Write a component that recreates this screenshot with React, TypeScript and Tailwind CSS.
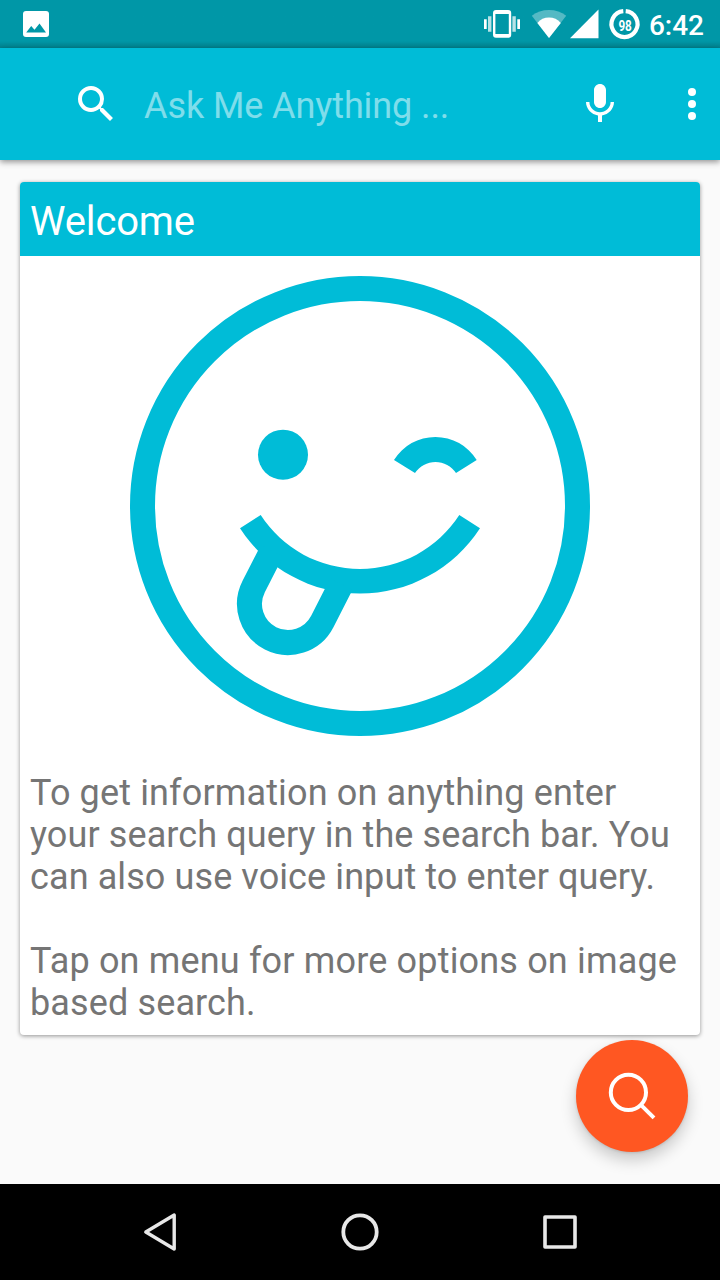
const BODY_LINES = [
  { text: "To get information on anything enter", tracking: "tracking-[0.14px]" },
  { text: "your search query in the search bar. You", tracking: "tracking-[0.1px]" },
  { text: "can also use voice input to enter query.", tracking: "tracking-[0.1px]" },
  { text: "", tracking: "" },
  { text: "Tap on menu for more options on image", tracking: "tracking-[0.17px]" },
  { text: "based search.", tracking: "tracking-[0.13px]" },
];

function StatusBar() {
  return (
    <div className="flex h-12 shrink-0 items-center justify-between bg-gradient-to-b from-[#0097a7] from-85% to-[#00828f] pr-4 text-white">
      <svg className="ml-[23px] h-[26px] w-[26px]" viewBox="0 0 26 26" fill="none">
        <rect width="26" height="26" rx="3" fill="white" />
        <path d="M3.2 21.5 8.2 15l3.3 3.8 5-6.3 6.5 9z" fill="#0097a7" />
      </svg>
      <div className="flex h-12 items-center">
        <svg className="h-12 w-[160px]" viewBox="484 0 160 48" fill="white">
          <rect x="494.2" y="11.2" width="15.8" height="25.4" rx="1.8" fill="none" stroke="white" strokeWidth="2.4" />
          <path d="M494 11h16v3h-16zM494 34h16v3h-16z" />
          <path d="M488 16.3h3.4v15.4H488zM512.4 16.3h3.4v15.4h-3.4z" opacity=".72" />
          <path d="M484 19.3h2.7v9.7H484zM517.3 19.3h2.7v9.7h-2.7z" />
          <path d="M549 38 531.8 15.8Q539 10 549 10t17.2 5.8z" opacity=".33" />
          <path d="M549 38 537.4 22.9Q542 17.5 549 17.5t11.8 5.4z" />
          <path d="M570 38.3 598.5 9.6V38.3z" />
          <path d="M625.7 11.1A13 13 0 1 1 623.3 11.1" fill="none" stroke="white" strokeWidth="4.2" />
          <text x="618.4" y="30.5" textLength="13.4" lengthAdjust="spacingAndGlyphs" className="font-[Roboto,sans-serif] text-[14.5px] font-bold">98</text>
        </svg>
        <span className="ml-[5px] mt-[3px] font-[Roboto,sans-serif] text-[28px] leading-8 font-medium">6:42</span>
      </div>
    </div>
  );
}

function Toolbar() {
  return (
    <div className="z-10 flex h-28 shrink-0 items-center bg-[#00bcd7] pr-1 pl-[72px] text-white shadow-[0_2px_6px_rgba(0,0,0,0.42)]">
      <svg className="h-12 w-12" viewBox="0 0 24 24" fill="currentColor">
        <path d="M15.5 14h-.79l-.28-.27A6.471 6.471 0 0 0 16 9.5 6.5 6.5 0 1 0 9.5 16c1.61 0 3.09-.59 4.23-1.57l.27.28v.79l5 4.99L20.49 19l-4.99-5zm-6 0C7.01 14 5 11.99 5 9.5S7.01 5 9.5 5 14 7.01 14 9.5 11.99 14 9.5 14z" />
      </svg>
      <span className="mt-1 ml-6 flex-1 text-[36px] leading-[42px] tracking-[-0.09px] text-white/50">Ask Me Anything ...</span>
      <svg className="h-12 w-12" viewBox="0 0 24 24" fill="currentColor">
        <path d="M12 14c1.66 0 2.99-1.34 2.99-3L15 5c0-1.66-1.34-3-3-3S9 3.34 9 5v6c0 1.66 1.34 3 3 3zm5.3-3c0 3-2.54 5.1-5.3 5.1S6.7 14 6.7 11H5c0 3.41 2.72 6.23 6 6.72V21h2v-3.28c3.28-.48 6-3.3 6-6.72h-1.7z" />
      </svg>
      <svg className="ml-11 h-12 w-12" viewBox="0 0 24 24" fill="currentColor">
        <circle cx="12" cy="6" r="2" />
        <circle cx="12" cy="12" r="2" />
        <circle cx="12" cy="18" r="2" />
      </svg>
    </div>
  );
}

function WinkingFace() {
  return (
    <svg className="mx-auto mt-5 h-[460px] w-[460px]" viewBox="130 276 460 460" fill="#00bcd7">
      <circle cx="360" cy="506" r="217.5" fill="none" stroke="#00bcd7" strokeWidth="25" />
      <circle cx="283" cy="454.7" r="25" />
      <path d="M394 460A48.6 48.6 0 0 1 476.7 460L456 473A24.6 24.6 0 0 0 415 473Z" />
      <path d="M240 528.2 260.7 515A118.3 118.3 0 0 0 459.3 515L480 528.2A142.9 142.9 0 0 1 240 528.2Z" />
      <path d="M271.9 550.9 253.7 586.5A38.5 38.5 0 0 0 322.3 621.5L341.4 584" fill="none" stroke="#00bcd7" strokeWidth="25" />
    </svg>
  );
}

function WelcomeCard() {
  return (
    <div className="mx-5 mt-[22px] h-[853px] overflow-hidden rounded-[4px] bg-white shadow-[0_1px_4px_rgba(0,0,0,0.42)]">
      <h1 className="h-[74px] bg-[#00bcd7] pt-4 pl-[10px] text-[40px] leading-[47px] tracking-[-0.14px] text-white">Welcome</h1>
      <WinkingFace />
      <div className="mt-9 pl-[10px] text-[36px] leading-[42px] whitespace-nowrap text-[#757575]">
        {BODY_LINES.map((line, i) => (
          <p key={i} className={`h-[42px] ${line.tracking}`}>{line.text}</p>
        ))}
      </div>
    </div>
  );
}

function NavigationBar() {
  return (
    <div className="z-10 flex h-24 shrink-0 items-center justify-center gap-[152px] bg-black">
      <svg className="h-12 w-12" viewBox="0 0 48 48" fill="none" stroke="#e8e8e8" strokeWidth="3.4" strokeLinejoin="round">
        <path d="M9.8 24 38.2 7v34z" />
      </svg>
      <svg className="h-12 w-12" viewBox="0 0 48 48" fill="none" stroke="#e8e8e8" strokeWidth="3.8">
        <circle cx="24" cy="24" r="16.7" />
      </svg>
      <svg className="h-12 w-12" viewBox="0 0 48 48" fill="none" stroke="#e8e8e8" strokeWidth="3.6" strokeLinejoin="round">
        <rect x="9" y="9" width="30" height="30" />
      </svg>
    </div>
  );
}

export default function App() {
  return (
    <div className="relative flex h-[1280px] w-[720px] flex-col overflow-hidden bg-[#fafafa] font-[Roboto,sans-serif]">
      <StatusBar />
      <Toolbar />
      <main className="flex-1">
        <WelcomeCard />
      </main>
      <button
        aria-label="Search"
        className="absolute right-8 bottom-32 h-28 w-28 rounded-full bg-[#ff5722] shadow-[0_8px_16px_rgba(0,0,0,0.2),0_1px_3px_rgba(0,0,0,0.12)]"
      >
        <svg className="h-28 w-28" viewBox="0 0 112 112" fill="none" stroke="white">
          <circle cx="52.4" cy="52.4" r="17.6" strokeWidth="4" />
          <path d="M64.6 64.6 78 77.8" strokeWidth="4" />
        </svg>
      </button>
      <NavigationBar />
    </div>
  );
}
